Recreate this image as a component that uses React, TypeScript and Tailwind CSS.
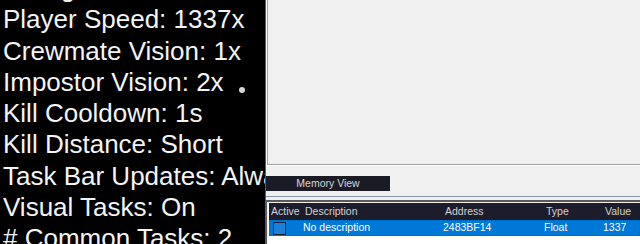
const SETTINGS = [
  "Voting Time: 120s",
  "Player Speed: 1337x",
  "Crewmate Vision: 1x",
  "Impostor Vision: 2x",
  "Kill Cooldown: 1s",
  "Kill Distance: Short",
  "Task Bar Updates: Always",
  "Visual Tasks: On",
  "# Common Tasks: 2",
];

const COLUMNS = [
  { label: "Active", width: "w-[34px]" },
  { label: "Description", width: "w-[140px]" },
  { label: "Address", width: "w-[101px]" },
  { label: "Type", width: "w-[59px]" },
  { label: "Value", width: "flex-1" },
];

function GameSettings() {
  return (
    <div className="relative h-full w-[265px] shrink-0 overflow-hidden bg-black">
      <div className="-mt-[27px] whitespace-nowrap pl-[3px] font-['Liberation_Sans',Arial,sans-serif] text-[26px] leading-[31.3px] text-[#f4f4f4]">
        {SETTINGS.map((line) => (
          <div key={line}>{line}</div>
        ))}
      </div>
      <span className="absolute left-[239px] top-[87px] h-[6px] w-[6px] rounded-full bg-[#d6d6d6]" />
    </div>
  );
}

function CheatTable() {
  return (
    <div className="flex h-full flex-1 flex-col border-l border-[#5c5c5c] bg-[#f0f0f0] font-['Liberation_Sans',Arial,sans-serif] text-[10.5px]">
      <div className="h-[166px] shrink-0 border-b border-white border-l border-l-white">
        <div className="h-full border-b border-l border-[#a0a0a0]" />
      </div>

      <div className="mt-[10px] flex h-[15px] w-[124px] items-center justify-center bg-[#1b1b26] text-[#d6d6d6]">
        Memory View
      </div>

      <div className="mt-[5px] h-px bg-[#8797b2]" />

      <div className="mt-[3px] flex flex-1 flex-col border-t-2 border-l border-[#5a5a5a] bg-white">
        <div className="flex-1 border-t border-l border-[#f0f0f0] pl-px">
          <div className="flex h-[17px] items-center bg-[#1c1c2b] text-[#d4d4d4]">
            {COLUMNS.map((c) => (
              <div key={c.label} className={`${c.width} pl-[2px]`}>
                {c.label}
              </div>
            ))}
          </div>
          <div className="flex h-[16px] items-center border border-dotted border-[#6e4a2c] bg-[#0078d7] text-white">
            <div className="w-[33px]">
              <div className="ml-[3px] h-[13px] w-[13px] border border-[#16203a] bg-[#1d7fd6]" />
            </div>
            <div className="w-[140px]">No description</div>
            <div className="w-[101px]">2483BF14</div>
            <div className="w-[59px]">Float</div>
            <div className="flex-1">1337</div>
          </div>
        </div>
      </div>
    </div>
  );
}

export default function App() {
  return (
    <div className="flex h-[244px] w-[640px] overflow-hidden">
      <GameSettings />
      <CheatTable />
    </div>
  );
}
